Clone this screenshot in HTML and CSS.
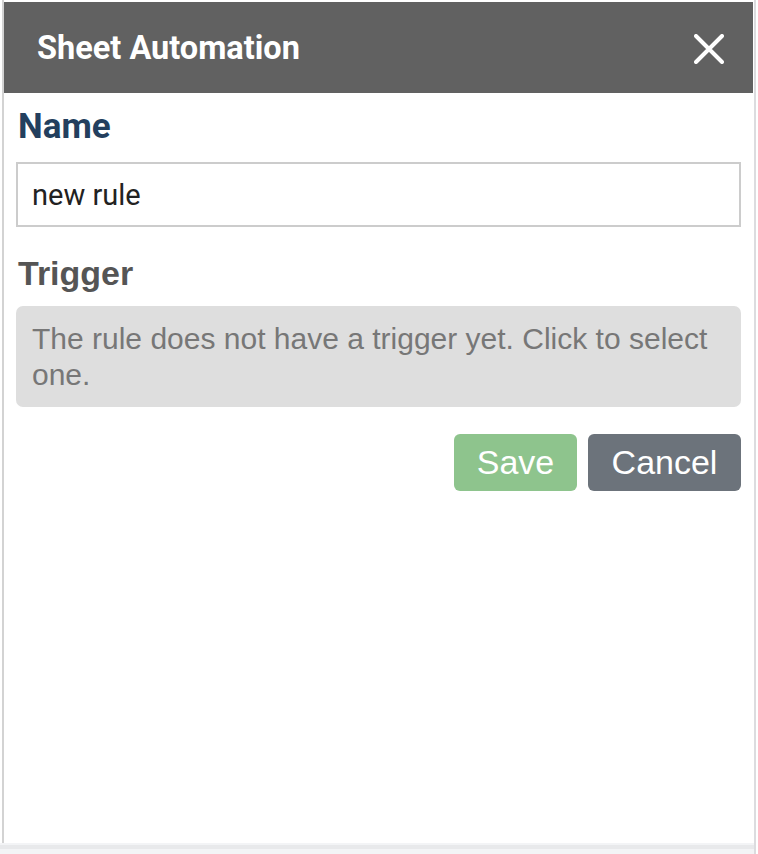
FILE: index.html
```html
<!DOCTYPE html>
<html>
<head>
<meta charset="utf-8">
<link rel="stylesheet" href="styles.css">
</head>
<body>
<div class="page">
  <div class="panel">
    <div class="header">
      <div class="title">Sheet Automation</div>
      <svg class="close" width="30" height="30" viewBox="0 0 30 30">
        <path d="M2 2 L28 28 M28 2 L2 28" stroke="#fff" stroke-width="4" stroke-linecap="round"/>
      </svg>
    </div>
    <div class="body">
      <div class="label-name">Name</div>
      <div class="input">new rule</div>
      <div class="label-trigger">Trigger</div>
      <div class="trigger-box">The rule does not have a trigger yet. Click to select one.</div>
      <div class="actions">
        <div class="btn btn-save">Save</div>
        <div class="btn btn-cancel">Cancel</div>
      </div>
    </div>
  </div>
  <div class="bottom"><div class="bottom-band"></div></div>
</div>
</body>
</html>
```
FILE: styles.css
```css
html, body {
  margin: 0;
  padding: 0;
  background: #fff;
}
.page {
  width: 756px;
  height: 854px;
  border-right: 2px solid #dcdcdf;
  display: flex;
  flex-direction: column;
  box-sizing: border-box;
}
.panel {
  margin-left: 2px;
  border-left: 2px solid #d3d3d3;
  padding-top: 2px;
  width: 751px;
  height: 843px;
  box-sizing: border-box;
}
.header {
  height: 91px;
  background: #616161;
  display: flex;
  align-items: center;
  justify-content: space-between;
  padding: 0 29px 0 33px;
}
.title {
  font-family: Roboto, "Liberation Sans", sans-serif;
  font-weight: 700;
  font-size: 32.5px;
  color: #fff;
  margin-top: 0;
}
.close {
  display: block;
  margin-top: 2px;
}
.body {
  padding: 0 12px;
}
.label-name {
  font-family: Roboto, "Liberation Sans", sans-serif;
  font-weight: 700;
  font-size: 35px;
  line-height: 40px;
  color: #233f5e;
  margin-top: 14px;
  padding-left: 2px;
}
.input {
  margin-top: 15px;
  height: 65px;
  box-sizing: border-box;
  border: 2px solid #cccccc;
  padding-left: 14px;
  display: flex;
  align-items: center;
  font-family: Roboto, "Liberation Sans", sans-serif;
  font-size: 29px;
  color: #222;
}
.label-trigger {
  font-family: "Liberation Sans", Arial, sans-serif;
  font-weight: 700;
  font-size: 34px;
  line-height: 40px;
  color: #555555;
  margin-top: 26px;
  padding-left: 2px;
}
.trigger-box {
  margin-top: 13px;
  background: #dedede;
  border-radius: 7px;
  padding: 15px 16px 15px 16px;
  font-family: "Liberation Sans", Arial, sans-serif;
  font-size: 30px;
  line-height: 36px;
  color: #777777;
  height: 101px;
  box-sizing: border-box;
}
.actions {
  margin-top: 27px;
  display: flex;
  justify-content: flex-end;
  gap: 11px;
}
.btn {
  height: 57px;
  border-radius: 6px;
  display: flex;
  align-items: center;
  justify-content: center;
  font-family: "Liberation Sans", Arial, sans-serif;
  font-size: 34px;
  color: #fff;
}
.btn-save {
  width: 123px;
  background: #8ec48d;
}
.btn-cancel {
  width: 153px;
  background: #6c737b;
}
.bottom {
  flex: 1;
  background: #f3f4f6;
  padding-top: 2px;
}
.bottom-band {
  height: 4px;
  background: #e8e9eb;
}
```
